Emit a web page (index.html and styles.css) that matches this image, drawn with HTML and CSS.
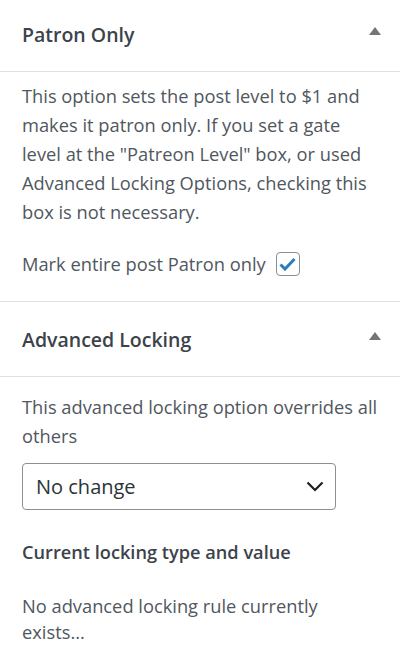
FILE: index.html
```html
<!DOCTYPE html>
<html lang="en">
<head>
    <meta charset="UTF-8">
    <meta name="viewport" content="width=device-width, initial-scale=1.0">
    <title>Patreon Locking</title>
    <link rel="stylesheet" href="styles.css">
</head>
<body>
    <div class="sidebar">
        <div class="panel first">
            <h2 class="panel-title">
                <span>Patron Only</span>
                <span class="toggle"></span>
            </h2>
            <div class="panel-body">
                <p>This option sets the post level to $1 and makes it patron only. If you set a gate level at the "Patreon Level" box, or used Advanced Locking Options, checking this box is not necessary.</p>
                <label class="check-row">
                    Mark entire post Patron only
                    <span class="checkbox">
                        <svg width="17" height="14" viewBox="0 0 17 14"><path d="M1.5 7.5 L6 12 L15.5 2" fill="none" stroke="#2a7dbf" stroke-width="3"/></svg>
                    </span>
                </label>
            </div>
        </div>

        <div class="panel">
            <h2 class="panel-title">
                <span>Advanced Locking</span>
                <span class="toggle"></span>
            </h2>
            <div class="panel-body second">
                <p>This advanced locking option overrides all others</p>
                <div class="select">
                    <span>No change</span>
                    <svg width="18" height="11" viewBox="0 0 18 11"><path d="M1.5 1.5 L9 9 L16.5 1.5" fill="none" stroke="#1e1e1e" stroke-width="2.2"/></svg>
                </div>
                <h3 class="sub-title">Current locking type and value</h3>
                <div class="status">No advanced locking rule currently exists...</div>
            </div>
        </div>
    </div>
</body>
</html>
```

FILE: styles.css
```css
body {
    margin: 0;
    background: #fff;
    font-family: "Open Sans", "Noto Sans", sans-serif;
    color: #50575e;
}

.sidebar {
    width: 400px;
}

.panel {
    border-bottom: 1px solid #e0e0e0;
}

.panel.first {
    margin-top: -3px;
}

.panel-title {
    margin: 0;
    height: 74px;
    padding: 0 19px 0 22px;
    display: flex;
    align-items: center;
    justify-content: space-between;
    border-bottom: 1px solid #e0e0e0;
    font-size: 19.5px;
    font-weight: 600;
    color: #3c434a;
}

.toggle {
    width: 0;
    height: 0;
    border-left: 6px solid transparent;
    border-right: 6px solid transparent;
    border-bottom: 8px solid #757575;
    margin-bottom: 7px;
}

.panel-body {
    padding: 9px 19px 23px 22px;
    font-size: 18.3px;
    line-height: 29px;
}

.panel-body p {
    margin: 0;
}

.panel-body.second {
    padding-top: 15px;
}

.check-row {
    display: flex;
    align-items: center;
    gap: 10px;
    margin-top: 23px;
}

.checkbox {
    width: 22px;
    height: 22px;
    border: 1px solid #8c8f94;
    border-radius: 4px;
    display: flex;
    align-items: center;
    justify-content: center;
}

.select {
    margin-top: 13px;
    width: 288px;
    height: 45px;
    border: 1px solid #8c8f94;
    border-radius: 4px;
    display: flex;
    align-items: center;
    justify-content: space-between;
    padding: 0 11px 0 13px;
    font-size: 20px;
    color: #2c3338;
}

.sub-title {
    margin: 28px 0 0;
    font-size: 18.2px;
    font-weight: 600;
    color: #3c434a;
}

.status {
    margin-top: 26px;
    line-height: 26px;
}
```
